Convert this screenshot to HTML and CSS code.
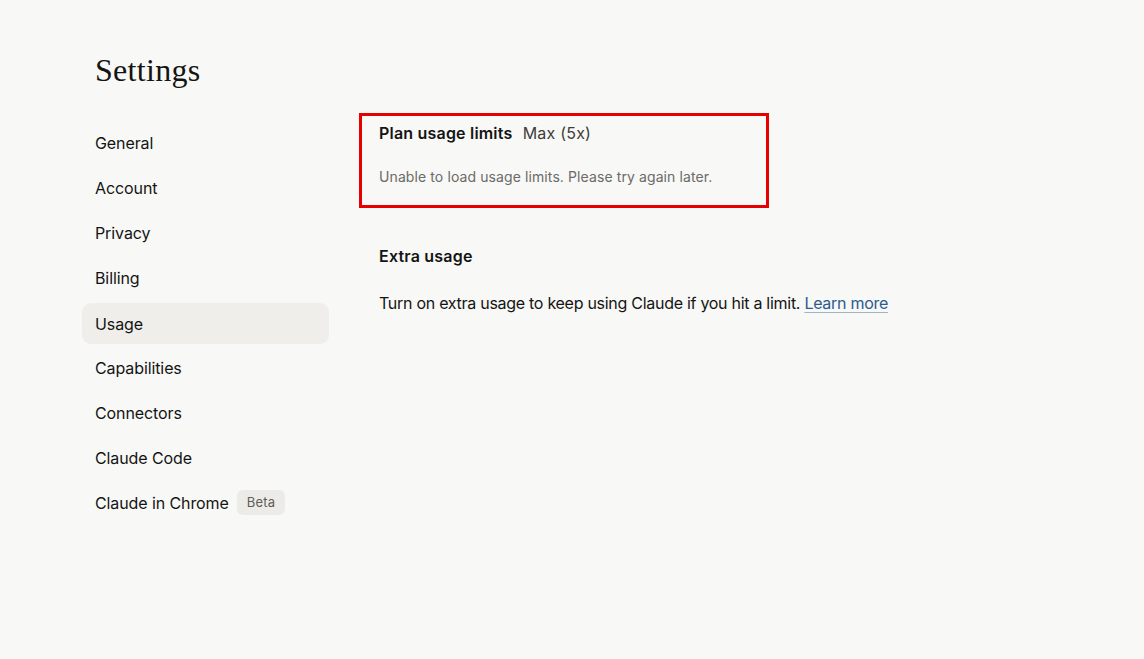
FILE: index.html
```html
<!DOCTYPE html>
<html lang="en">
<head>
    <meta charset="UTF-8">
    <meta name="viewport" content="width=device-width, initial-scale=1.0">
    <title>Settings</title>
    <link rel="stylesheet" href="styles.css">
</head>
<body>
    <div class="page">
        <h1 class="page-title">Settings</h1>

        <div class="layout">
            <nav class="side-nav">
                <a href="#" class="nav-item">General</a>
                <a href="#" class="nav-item">Account</a>
                <a href="#" class="nav-item">Privacy</a>
                <a href="#" class="nav-item">Billing</a>
                <a href="#" class="nav-item active">Usage</a>
                <a href="#" class="nav-item">Capabilities</a>
                <a href="#" class="nav-item">Connectors</a>
                <a href="#" class="nav-item">Claude Code</a>
                <a href="#" class="nav-item">Claude in Chrome <span class="badge">Beta</span></a>
            </nav>

            <main class="content">
                <section class="plan-limits">
                    <h2 class="section-title">Plan usage limits <span class="plan-name">Max (5x)</span></h2>
                    <p class="muted">Unable to load usage limits. Please try again later.</p>
                </section>

                <section class="extra-usage">
                    <h2 class="section-title">Extra usage</h2>
                    <p class="body-text">Turn on extra usage to keep using Claude if you hit a limit. <a href="#" class="link">Learn more</a></p>
                </section>
            </main>
        </div>
    </div>
</body>
</html>
```

FILE: styles.css
```css
body {
    margin: 0;
    background-color: #f8f8f6;
    color: #141413;
    font-family: "Inter", "Noto Sans", sans-serif;
}

.page {
    padding: 50px 0 0 82px;
}

.page-title {
    margin: 0 0 23px 13px;
    font-family: "Liberation Serif", serif;
    font-weight: 400;
    font-size: 32px;
    line-height: 40px;
    letter-spacing: 0.3px;
}

.layout {
    display: flex;
    gap: 30px;
}

.side-nav {
    width: 247px;
    display: flex;
    flex-direction: column;
    gap: 4px;
    padding-top: 9px;
}

.nav-item {
    display: flex;
    align-items: center;
    gap: 8px;
    height: 41px;
    padding: 0 13px;
    border-radius: 9px;
    color: #141413;
    text-decoration: none;
    font-size: 16px;
    letter-spacing: -0.1px;
}

.nav-item.active {
    margin-top: 1px;
    margin-bottom: -1px;
    background-color: #efeeea;
}

.badge {
    display: inline-block;
    padding: 4px 10px;
    border-radius: 6px;
    background-color: #ecebe7;
    color: #5e5d59;
    font-size: 13px;
    line-height: 17px;
    letter-spacing: 0.2px;
}

.content {
    flex: 1;
}

.section-title {
    margin: 0;
    font-size: 16px;
    font-weight: 600;
    line-height: 24px;
    letter-spacing: 0.2px;
}

.plan-name {
    margin-left: 6px;
    font-weight: 400;
    color: #3d3d3a;
}

/* highlighted block */
.plan-limits {
    width: 370px;
    padding: 5px 17px 18px 17px;
    border: 3px solid #e60000;
}

.muted {
    margin: 22px 0 0;
    font-size: 14px;
    line-height: 20px;
    color: #6b6a66;
    letter-spacing: 0.1px;
}

.extra-usage {
    margin-top: 36px;
    padding-left: 20px;
}

.body-text {
    margin: 23px 0 0;
    font-size: 16px;
    line-height: 24px;
    letter-spacing: -0.28px;
}

.link {
    color: #2c5b8f;
    text-decoration: underline;
    text-decoration-color: #9fb3c9;
    text-underline-offset: 3px;
}
```
